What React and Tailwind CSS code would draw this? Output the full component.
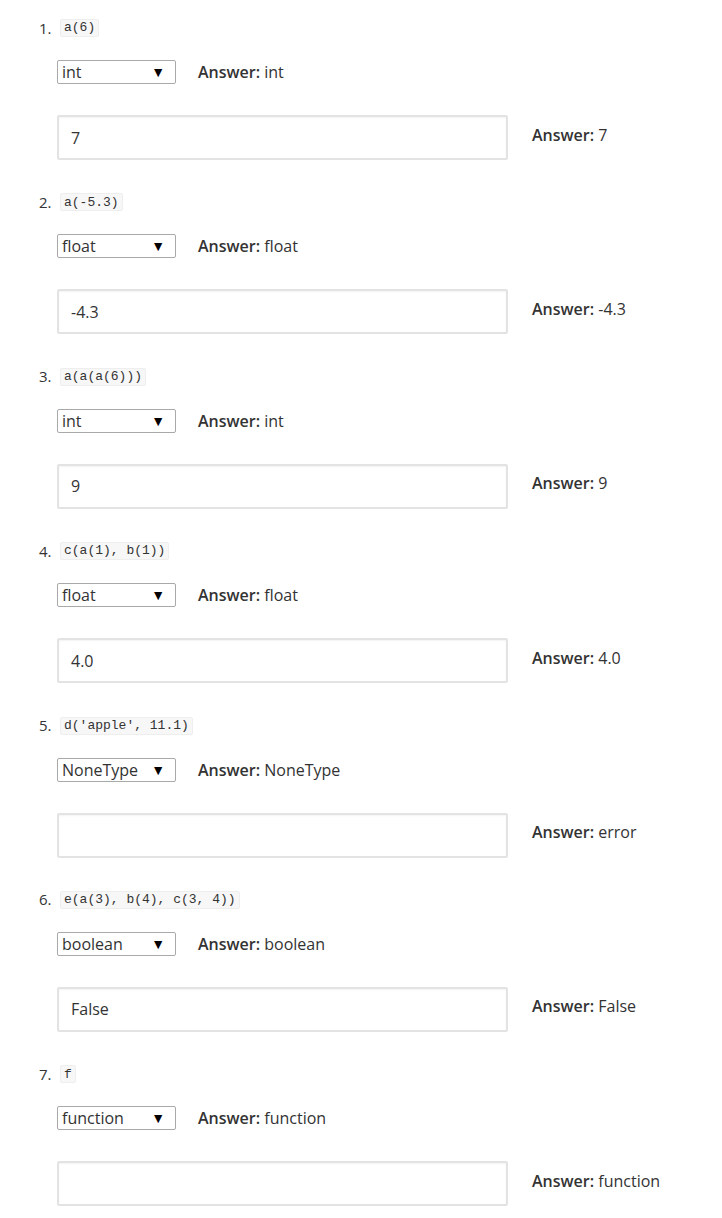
import React from 'react';

const ITEMS = [
    { code: 'a(6)', type: 'int', value: '7', answer: '7' },
    { code: 'a(-5.3)', type: 'float', value: '-4.3', answer: '-4.3' },
    { code: 'a(a(a(6)))', type: 'int', value: '9', answer: '9' },
    { code: 'c(a(1), b(1))', type: 'float', value: '4.0', answer: '4.0' },
    { code: "d('apple', 11.1)", type: 'NoneType', value: '', answer: 'error' },
    { code: 'e(a(3), b(4), c(3, 4))', type: 'boolean', value: 'False', answer: 'False' },
    { code: 'f', type: 'function', value: '', answer: 'function' },
];

function Answer({ text }) {
    return (
        <span className="text-[16px] text-[#333]">
            <span className="font-semibold">Answer:</span> {text}
        </span>
    );
}

export default function App() {
    return (
        <div className="min-h-[1218px] bg-white pt-[19px] pl-[39px] text-[#333] font-['Open_Sans','Liberation_Sans',sans-serif]">
            {ITEMS.map((item, idx) => (
                <div key={idx} className="flex flex-col mb-[33.4px]">
                    {/* question */}
                    <div className="flex items-center h-[18px]">
                        <span className="w-[21px] text-[15px] leading-none">{idx + 1}.</span>
                        <code className="bg-[#f7f7f7] border border-[#eeeeee] rounded-[2px] px-[3px] h-[18px] flex items-center text-[13px] text-[#333] font-['Liberation_Mono','Noto_Sans_CJK_SC',monospace]">
                            {item.code}
                        </code>
                    </div>

                    {/* type select */}
                    <div className="flex items-center mt-[23px] h-[24px] ml-[18px]">
                        <div className="w-[119px] h-[24px] border border-[#a9a9a9] rounded-[2px] flex items-center justify-between pl-[4px] pr-[10px]">
                            <span className="text-[16px] leading-none">{item.type}</span>
                            <span className="text-[14px] leading-none text-black">▼</span>
                        </div>
                        <div className="ml-[22px]">
                            <Answer text={item.type} />
                        </div>
                    </div>

                    {/* value input */}
                    <div className="flex items-center mt-[31px] ml-[18px]">
                        <div className="w-[451px] h-[45px] border-2 border-[#e3e3e3] rounded-[2px] shadow-[inset_0_1px_2px_rgba(0,0,0,0.05)] flex items-center pl-[12px]">
                            <span className="text-[16px]">{item.value}</span>
                        </div>
                        <div className="ml-[24px] -mt-[6px]">
                            <Answer text={item.answer} />
                        </div>
                    </div>
                </div>
            ))}
        </div>
    );
}
